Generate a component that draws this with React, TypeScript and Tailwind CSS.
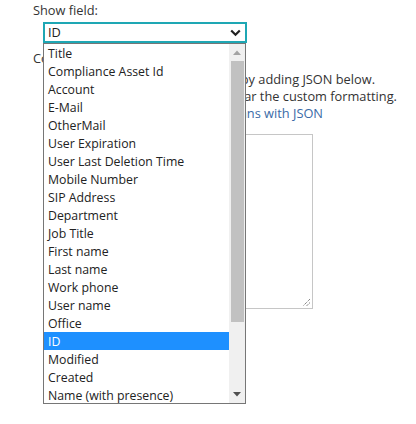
import React from "react";

const items = [
  "Title",
  "Compliance Asset Id",
  "Account",
  "E-Mail",
  "OtherMail",
  "User Expiration",
  "User Last Deletion Time",
  "Mobile Number",
  "SIP Address",
  "Department",
  "Job Title",
  "First name",
  "Last name",
  "Work phone",
  "User name",
  "Office",
  "ID",
  "Modified",
  "Created",
  "Name (with presence)",
];

export default function App() {
  return (
    <div className="relative w-[416px] h-[424px] bg-white text-[12.3px] text-[#333] font-['Open_Sans','Noto_Sans',sans-serif] overflow-hidden">
      <div className="pl-[33px] pt-[1px]">
        <div className="h-[18px] leading-[18px] text-[12.8px]">Show field:</div>
        <div className="ml-[10px] mt-[3px] w-[204px] h-[21px] border-2 border-[#1ea7b4] flex items-center justify-between pl-[3px] pr-[4px] text-[#222]">
          <span className="leading-[17px] text-[12.8px]">ID</span>
          <svg width="11" height="8" viewBox="0 0 11 8">
            <path d="M1.2 1.5 L5.5 5.8 L9.8 1.5" fill="none" stroke="#222" strokeWidth="2.2" />
          </svg>
        </div>
        <div className="mt-[6px] h-[18px] leading-[18px] whitespace-nowrap text-[12.8px]">Column formatting</div>
        <div className="mt-[4px] ml-[11px] leading-[17px] whitespace-nowrap text-[12.8px]">
          <div className="w-[331px] flex justify-end overflow-hidden">
            <span>Change the display of this column by adding JSON below.</span>
          </div>
          <div className="w-[353px] flex justify-end overflow-hidden">
            <span>Remove the text from the box to clear the custom formatting.</span>
          </div>
          <div className="w-[279px] flex justify-end overflow-hidden text-[#3a6aa6]">
            <span>Learn more about formatting columns with JSON</span>
          </div>
        </div>
        <div className="relative ml-[27px] mt-[12px] w-[253px] h-[175px] border border-[#c6c6c6]">
          <svg className="absolute right-[1px] bottom-[1px]" width="10" height="10" viewBox="0 0 10 10">
            <path d="M9 2 L2 9 M9 5.5 L5.5 9" stroke="#555" strokeWidth="1" strokeDasharray="1 1" />
          </svg>
        </div>
      </div>

      <div className="absolute left-[43px] top-[43px] w-[203px] h-[361px] border border-[#767676] bg-white flex">
        <div className="flex-1 flex flex-col">
          {items.map((it) => (
            <div
              key={it}
              className={
                "h-[18px] pt-[1px] leading-[17px] pl-[4px] whitespace-nowrap " +
                (it === "ID" ? "bg-[#1e90ff] text-white" : "text-[#222]")
              }
            >
              {it}
            </div>
          ))}
        </div>
        <div className="w-[16px] bg-[#f0f0f0] flex flex-col items-center">
          <div className="h-[17px] w-full flex items-center justify-center">
            <svg width="8" height="5" viewBox="0 0 8 5">
              <path d="M0 5 L4 0.5 L8 5 Z" fill="#a3a3a3" />
            </svg>
          </div>
          <div className="w-[13px] h-[261px] bg-[#c1c1c1]" />
          <div className="flex-1" />
          <div className="h-[17px] w-full flex items-center justify-center">
            <svg width="8" height="5" viewBox="0 0 8 5">
              <path d="M0 0 L8 0 L4 4.5 Z" fill="#505050" />
            </svg>
          </div>
        </div>
      </div>
    </div>
  );
}
